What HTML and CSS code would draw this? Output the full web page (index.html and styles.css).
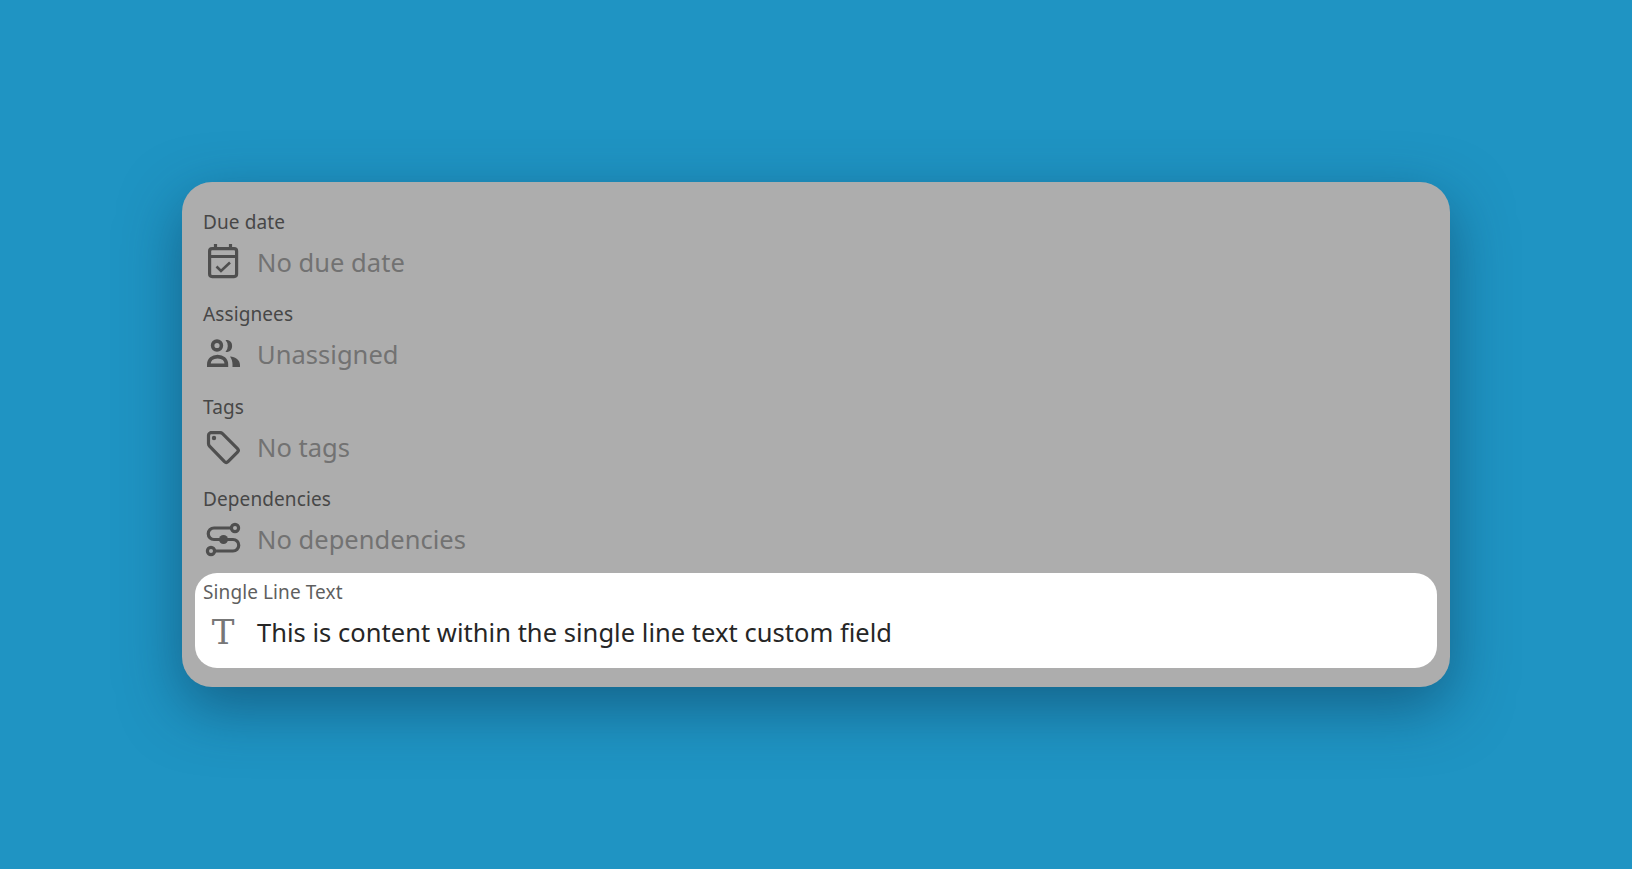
FILE: index.html
```html
<!DOCTYPE html>
<html lang="en">
<head>
    <meta charset="UTF-8">
    <meta name="viewport" content="width=device-width, initial-scale=1.0">
    <title>Custom fields</title>
    <link rel="stylesheet" href="styles.css">
</head>
<body>
    <div class="card">
        <div class="field">
            <div class="field-label">Due date</div>
            <div class="field-value">
                <svg class="icon" viewBox="0 0 40 40" fill="none" stroke="currentColor" stroke-width="3.2">
                    <rect x="6.6" y="6.6" width="27" height="28" rx="2.5"/>
                    <path d="M6.6 14.5h27M12.5 2v6M27.5 2v6"/>
                    <path d="M13.5 24.5l4.5 4.500 9-8.500" stroke-width="2.6"/>
                </svg>
                <span>No due date</span>
            </div>
        </div>
        <div class="field">
            <div class="field-label">Assignees</div>
            <div class="field-value">
                <svg class="icon" viewBox="0 0 40 40" fill="none" stroke="currentColor" stroke-width="3.600">
                    <circle cx="14" cy="11.500" r="4.400"/>
                    <path d="M5.800 31.200v-.7c0-5 3.800-7.900 8.800-7.900s8.800 2.900 8.800 7.900v.7z"/>
                    <path d="M22.500 6h2a6.200 6.200 0 0 1 0 12h-2a9 9 0 0 0 0-12z" fill="currentColor" stroke="none"/>
                    <path d="M27 22.600c5.500.2 10 3.600 10 8.400v2h-7.500v-2.500c0-3-1-5.900-2.500-7.900z" fill="currentColor" stroke="none"/>
                </svg>
                <span>Unassigned</span>
            </div>
        </div>
        <div class="field">
            <div class="field-label">Tags</div>
            <div class="field-value">
                <svg class="icon" viewBox="0 0 40 40" fill="none" stroke="currentColor" stroke-width="3.200" stroke-linejoin="round">
                    <path d="M7.500 5.600h9.500a3.500 3.500 0 0 1 2.500 1l15 15a2.500 2.500 0 0 1 0 3.500l-9.500 9.500a2.500 2.500 0 0 1-3.500 0l-15-15.500a3.500 3.500 0 0 1-1-2.500v-7.500a3.500 3.500 0 0 1 2-3.500z"/>
                    <circle cx="11" cy="11" r="2.200" fill="currentColor" stroke="none"/>
                </svg>
                <span>No tags</span>
            </div>
        </div>
        <div class="field">
            <div class="field-label">Dependencies</div>
            <div class="field-value">
                <svg class="icon" viewBox="0 0 40 40" fill="none" stroke="currentColor" stroke-width="3.200">
                    <circle cx="32" cy="9" r="3.600"/>
                    <circle cx="8" cy="32" r="3.600"/>
                    <circle cx="20.500" cy="20.500" r="4.500" fill="currentColor" stroke="none"/>
                    <path d="M28 9H11a5.700 5.700 0 0 0 0 11.500h19a5.700 5.700 0 0 1 0 11.500H12"/>
                </svg>
                <span>No dependencies</span>
            </div>
        </div>
        <div class="field field-active">
            <div class="field-label">Single Line Text</div>
            <div class="field-value">
                <span class="icon icon-text">T</span>
                <span>This is content within the single line text custom field</span>
            </div>
        </div>
    </div>
</body>
</html>
```

FILE: styles.css
```css
* {
    box-sizing: border-box;
}
body {
    margin: 0;
    height: 100vh;
    display: grid;
    place-items: center;
    background-color: #1f94c3;
    font-family: "Noto Sans", sans-serif;
}
.card {
    width: 1268px;
    height: 505px;
    padding: 21px 13px 18px;
    background-color: #adadad;
    border-radius: 30px;
    box-shadow: 0 20px 60px rgba(10, 50, 80, 0.5);
}
.field {
    height: 92.4px;
    padding: 6px 8px 0 8px;
}
.field-label {
    font-size: 19px;
    line-height: 26px;
    letter-spacing: 0.1px;
    color: #474747;
}
.field-value {
    display: flex;
    align-items: center;
    gap: 14px;
    margin-top: 3px;
    height: 48px;
    font-size: 25.5px;
    letter-spacing: 0.03px;
    color: #727272;
}
.icon {
    flex: none;
    width: 40px;
    height: 40px;
    color: #4f4f4f;
}
.icon-text {
    font-family: "DejaVu Serif", serif;
    font-size: 34px;
    line-height: 40px;
    text-align: center;
    color: #777777;
}
.field-active {
    height: 95.5px;
    background-color: #ffffff;
    border-radius: 22px;
}
.field-active .field-label {
    color: #5f5f5f;
}
.field-active .field-value {
    color: #262626;
}
```
